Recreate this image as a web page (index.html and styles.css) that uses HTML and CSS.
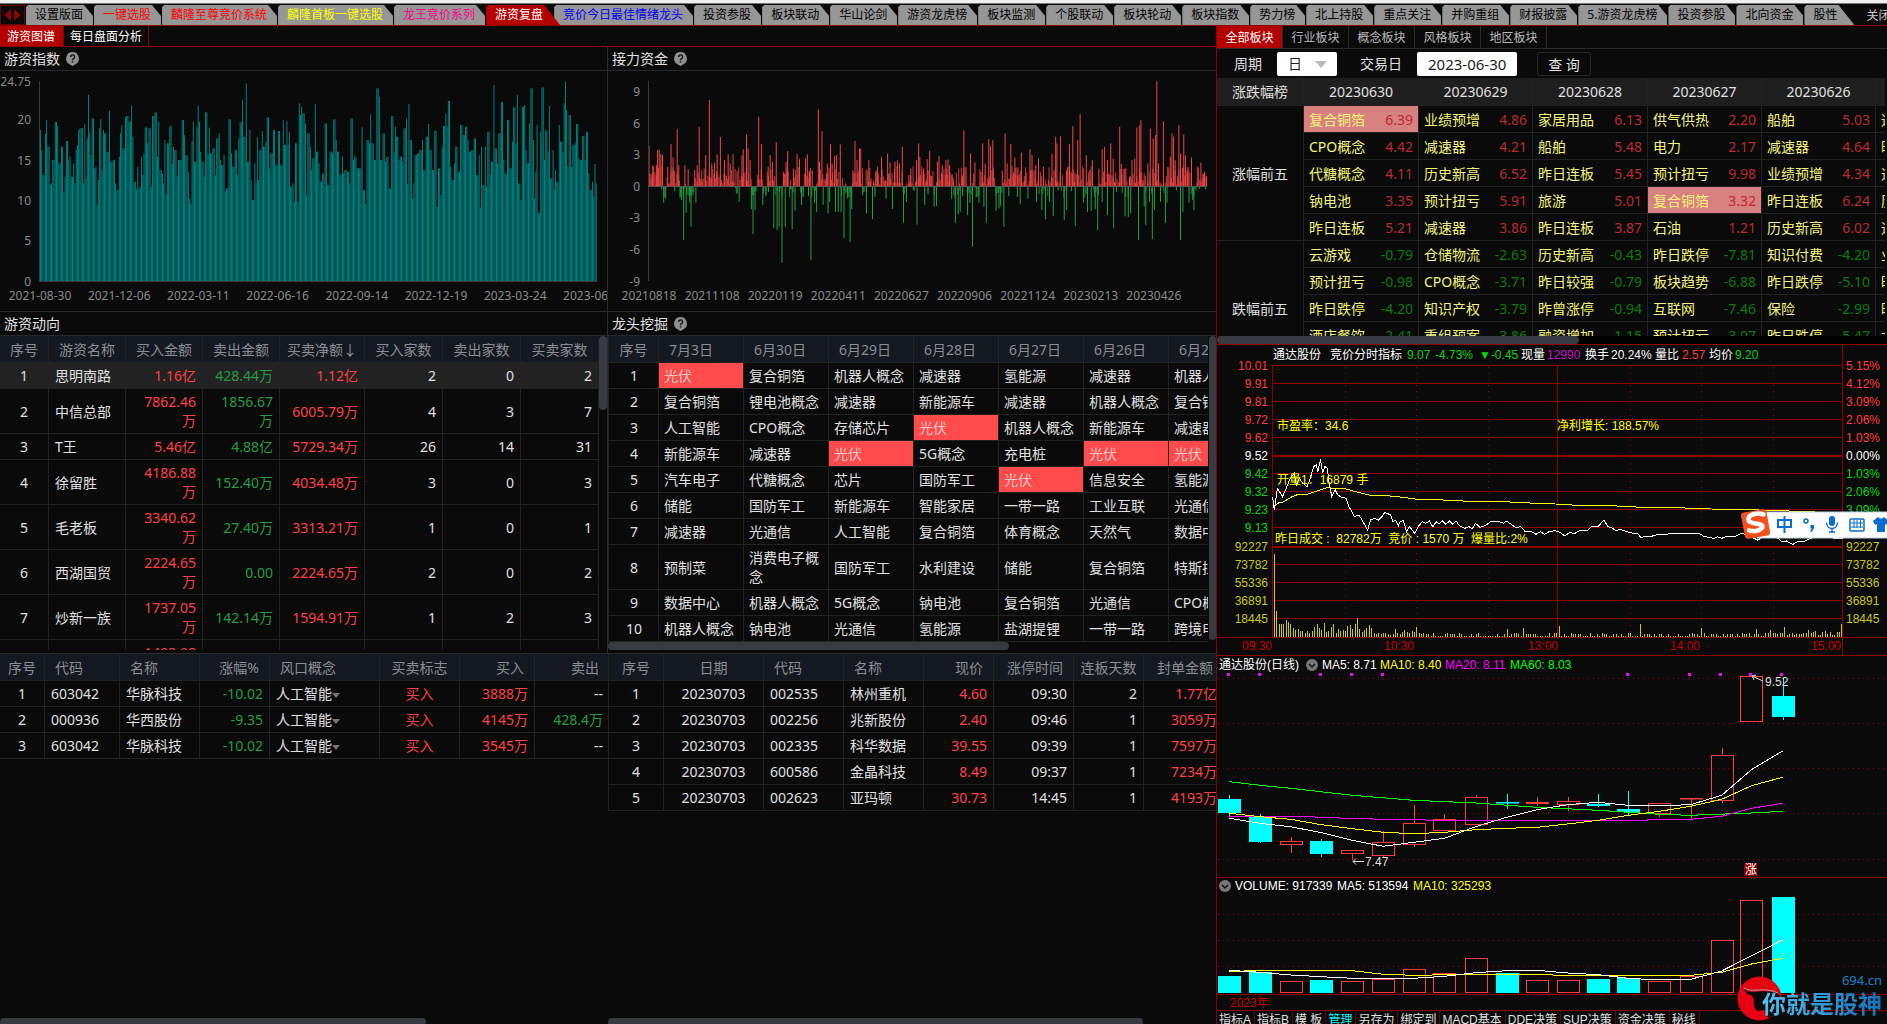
FILE: index.html
```html
<!DOCTYPE html>
<html lang="zh-CN">
<head>
    <meta charset="UTF-8">
    <meta name="viewport" content="width=device-width, initial-scale=1.0">
    <title>游资复盘</title>
    <link rel="stylesheet" href="styles.css">
</head>
<body>

<div class="window-strip"></div>

<!-- Page tabs -->
<nav class="page-tabs">
    <span class="tab-arrows">
        <button class="arrow arrow-left" aria-label="向左"></button>
        <button class="arrow arrow-right" aria-label="向右"></button>
    </span>
    <button class="page-tab">设置版面</button>
    <button class="page-tab tab-red">一键选股</button>
    <button class="page-tab tab-red">麟隆至尊竞价系统</button>
    <button class="page-tab tab-yellow">麟隆首板一键选股</button>
    <button class="page-tab tab-pink">龙王竞价系列</button>
    <button class="page-tab active">游资复盘</button>
    <button class="page-tab tab-blue">竞价今日最佳情绪龙头</button>
    <button class="page-tab">投资参股</button>
    <button class="page-tab">板块联动</button>
    <button class="page-tab">华山论剑</button>
    <button class="page-tab">游资龙虎榜</button>
    <button class="page-tab">板块监测</button>
    <button class="page-tab">个股联动</button>
    <button class="page-tab">板块轮动</button>
    <button class="page-tab">板块指数</button>
    <button class="page-tab">势力榜</button>
    <button class="page-tab">北上持股</button>
    <button class="page-tab">重点关注</button>
    <button class="page-tab">并购重组</button>
    <button class="page-tab">财报披露</button>
    <button class="page-tab">5.游资龙虎榜</button>
    <button class="page-tab">投资参股</button>
    <button class="page-tab">北向资金</button>
    <button class="page-tab tab-end">股性</button>
    <button class="tab-close">关闭</button>
</nav>

<main class="workspace">

    <!-- Left side: charts and tables -->
    <section class="review">
        <nav class="sub-tabs">
            <button class="sub-tab active">游资图谱</button>
            <button class="sub-tab">每日盘面分析</button>
        </nav>

        <div class="review-grid">
            <div class="panel">
                <h2 class="panel-title">游资指数
                    <svg class="help" viewBox="0 0 13 14"><path d="M6.5 0a6.5 6.5 0 0 1 2.6 12.4L6.5 14l-2.6-1.6A6.5 6.5 0 0 1 6.5 0z" fill="#8f8f8f"/><path d="M4.6 5a2 2 0 1 1 2.9 1.7c-.8.4-1 .7-1 1.5M6.5 9.300v1.200" fill="none" stroke="#111" stroke-width="1.400"/></svg>
                </h2>
                <svg class="chart" id="indexChart" viewBox="0 0 607 240"></svg>
            </div>
            <div class="panel">
                <h2 class="panel-title">接力资金
                    <svg class="help" viewBox="0 0 13 14"><path d="M6.5 0a6.5 6.5 0 0 1 2.6 12.4L6.5 14l-2.6-1.6A6.5 6.5 0 0 1 6.5 0z" fill="#8f8f8f"/><path d="M4.6 5a2 2 0 1 1 2.9 1.7c-.8.4-1 .7-1 1.5M6.5 9.300v1.200" fill="none" stroke="#111" stroke-width="1.400"/></svg>
                </h2>
                <svg class="chart" id="relayChart" viewBox="0 0 608 240"></svg>
            </div>

            <div class="panel">
                <h2 class="panel-title">游资动向</h2>
                <div class="table-pane">
                    <table class="grid-table moves">
                        <colgroup><col class="w49"><col class="w77"><col class="w77"><col class="w77"><col class="w85"><col class="w78"><col class="w78"><col class="w78"></colgroup>
                        <thead>
                            <tr><th>序号</th><th>游资名称</th><th>买入金额</th><th>卖出金额</th><th>买卖净额↓</th><th>买入家数</th><th>卖出家数</th><th>买卖家数</th></tr>
                        </thead>
                        <tbody>
                            <tr class="selected"><td class="mid">1</td><td>思明南路</td><td class="num up">1.16亿</td><td class="num down">428.44万</td><td class="num up">1.12亿</td><td class="num">2</td><td class="num">0</td><td class="num">2</td></tr>
                            <tr><td class="mid">2</td><td>中信总部</td><td class="num up">7862.46万</td><td class="num down">1856.67万</td><td class="num up">6005.79万</td><td class="num">4</td><td class="num">3</td><td class="num">7</td></tr>
                            <tr><td class="mid">3</td><td>T王</td><td class="num up">5.46亿</td><td class="num down">4.88亿</td><td class="num up">5729.34万</td><td class="num">26</td><td class="num">14</td><td class="num">31</td></tr>
                            <tr><td class="mid">4</td><td>徐留胜</td><td class="num up">4186.88万</td><td class="num down">152.40万</td><td class="num up">4034.48万</td><td class="num">3</td><td class="num">0</td><td class="num">3</td></tr>
                            <tr><td class="mid">5</td><td>毛老板</td><td class="num up">3340.62万</td><td class="num down">27.40万</td><td class="num up">3313.21万</td><td class="num">1</td><td class="num">0</td><td class="num">1</td></tr>
                            <tr><td class="mid">6</td><td>西湖国贸</td><td class="num up">2224.65万</td><td class="num down">0.00</td><td class="num up">2224.65万</td><td class="num">2</td><td class="num">0</td><td class="num">2</td></tr>
                            <tr><td class="mid">7</td><td>炒新一族</td><td class="num up">1737.05万</td><td class="num down">142.14万</td><td class="num up">1594.91万</td><td class="num">1</td><td class="num">2</td><td class="num">3</td></tr>
                            <tr><td></td><td></td><td class="num up">1493.98万</td><td></td><td></td><td></td><td></td><td></td></tr>
                        </tbody>
                    </table>
                </div>
                <span class="thumb thumb-moves"></span>
            </div>

            <div class="panel">
                <h2 class="panel-title">龙头挖掘
                    <svg class="help" viewBox="0 0 13 14"><path d="M6.5 0a6.5 6.5 0 0 1 2.6 12.4L6.5 14l-2.6-1.6A6.5 6.5 0 0 1 6.5 0z" fill="#8f8f8f"/><path d="M4.6 5a2 2 0 1 1 2.9 1.7c-.8.4-1 .7-1 1.5M6.5 9.300v1.200" fill="none" stroke="#111" stroke-width="1.400"/></svg>
                </h2>
                <div class="table-pane pane-leaders">
                    <table class="grid-table leaders">
                        <colgroup><col class="w51"><col class="w85"><col class="w85"><col class="w85"><col class="w85"><col class="w85"><col class="w85"><col class="w85"></colgroup>
                        <thead>
                            <tr><th>序号</th><th>7月3日</th><th>6月30日</th><th>6月29日</th><th>6月28日</th><th>6月27日</th><th>6月26日</th><th>6月21日</th></tr>
                        </thead>
                        <tbody>
                            <tr><td class="mid">1</td><td class="hot">光伏</td><td>复合铜箔</td><td>机器人概念</td><td>减速器</td><td>氢能源</td><td>减速器</td><td>机器人概念</td></tr>
                            <tr><td class="mid">2</td><td>复合铜箔</td><td>锂电池概念</td><td>减速器</td><td>新能源车</td><td>减速器</td><td>机器人概念</td><td>复合铜箔</td></tr>
                            <tr><td class="mid">3</td><td>人工智能</td><td>CPO概念</td><td>存储芯片</td><td class="hot">光伏</td><td>机器人概念</td><td>新能源车</td><td>减速器</td></tr>
                            <tr><td class="mid">4</td><td>新能源车</td><td>减速器</td><td class="hot">光伏</td><td>5G概念</td><td>充电桩</td><td class="hot">光伏</td><td class="hot">光伏</td></tr>
                            <tr><td class="mid">5</td><td>汽车电子</td><td>代糖概念</td><td>芯片</td><td>国防军工</td><td class="hot">光伏</td><td>信息安全</td><td>氢能源</td></tr>
                            <tr><td class="mid">6</td><td>储能</td><td>国防军工</td><td>新能源车</td><td>智能家居</td><td>一带一路</td><td>工业互联</td><td>光通信</td></tr>
                            <tr><td class="mid">7</td><td>减速器</td><td>光通信</td><td>人工智能</td><td>复合铜箔</td><td>体育概念</td><td>天然气</td><td>数据中心</td></tr>
                            <tr><td class="mid">8</td><td>预制菜</td><td>消费电子概念</td><td>国防军工</td><td>水利建设</td><td>储能</td><td>复合铜箔</td><td>特斯拉</td></tr>
                            <tr><td class="mid">9</td><td>数据中心</td><td>机器人概念</td><td>5G概念</td><td>钠电池</td><td>复合铜箔</td><td>光通信</td><td>CPO概念</td></tr>
                            <tr><td class="mid">10</td><td>机器人概念</td><td>钠电池</td><td>光通信</td><td>氢能源</td><td>盐湖提锂</td><td>一带一路</td><td>跨境电商</td></tr>
                        </tbody>
                    </table>
                </div>
                <span class="thumb thumb-leaders-v"></span>
                <span class="thumb thumb-leaders-h"></span>
            </div>

            <div class="panel panel-last">
                <div class="table-pane pane-last">
                    <table class="grid-table trades">
                        <colgroup><col class="w45"><col class="w75"><col class="w80"><col class="w70"><col class="w110"><col class="w80"><col class="w75"><col class="w75"></colgroup>
                        <thead>
                            <tr><th>序号</th><th class="start">代码</th><th class="start">名称</th><th class="end">涨幅%</th><th class="start">风口概念</th><th>买卖标志</th><th class="end">买入</th><th class="end">卖出</th></tr>
                        </thead>
                        <tbody>
                            <tr><td class="mid">1</td><td>603042</td><td>华脉科技</td><td class="num down">-10.02</td><td>人工智能<i class="caret"></i></td><td class="mid up">买入</td><td class="num up">3888万</td><td class="num">--</td></tr>
                            <tr><td class="mid">2</td><td>000936</td><td>华西股份</td><td class="num down">-9.35</td><td>人工智能<i class="caret"></i></td><td class="mid up">买入</td><td class="num up">4145万</td><td class="num down">428.4万</td></tr>
                            <tr><td class="mid">3</td><td>603042</td><td>华脉科技</td><td class="num down">-10.02</td><td>人工智能<i class="caret"></i></td><td class="mid up">买入</td><td class="num up">3545万</td><td class="num">--</td></tr>
                        </tbody>
                    </table>
                </div>
                <span class="thumb thumb-trades"></span>
            </div>

            <div class="panel panel-last">
                <div class="table-pane pane-last">
                    <table class="grid-table limits">
                        <colgroup><col class="w56"><col class="w100"><col class="w80"><col class="w80"><col class="w70"><col class="w80"><col class="w70"><col class="w80"></colgroup>
                        <thead>
                            <tr><th>序号</th><th>日期</th><th class="start">代码</th><th class="start">名称</th><th class="end">现价</th><th class="end">涨停时间</th><th>连板天数</th><th class="end">封单金额</th></tr>
                        </thead>
                        <tbody>
                            <tr><td class="mid">1</td><td class="mid">20230703</td><td>002535</td><td>林州重机</td><td class="num up">4.60</td><td class="num">09:30</td><td class="num">2</td><td class="num up">1.77亿</td></tr>
                            <tr><td class="mid">2</td><td class="mid">20230703</td><td>002256</td><td>兆新股份</td><td class="num up">2.40</td><td class="num">09:46</td><td class="num">1</td><td class="num up">3059万</td></tr>
                            <tr><td class="mid">3</td><td class="mid">20230703</td><td>002335</td><td>科华数据</td><td class="num up">39.55</td><td class="num">09:39</td><td class="num">1</td><td class="num up">7597万</td></tr>
                            <tr><td class="mid">4</td><td class="mid">20230703</td><td>600586</td><td>金晶科技</td><td class="num up">8.49</td><td class="num">09:37</td><td class="num">1</td><td class="num up">7234万</td></tr>
                            <tr><td class="mid">5</td><td class="mid">20230703</td><td>002623</td><td>亚玛顿</td><td class="num up">30.73</td><td class="num">14:45</td><td class="num">1</td><td class="num up">4193万</td></tr>
                        </tbody>
                    </table>
                </div>
                <span class="thumb thumb-limits"></span>
            </div>
        </div>
    </section>

    <!-- Right side: sector ranking and stock charts -->
    <aside class="market">
        <nav class="sector-tabs">
            <button class="sector-tab active">全部板块</button>
            <button class="sector-tab">行业板块</button>
            <button class="sector-tab">概念板块</button>
            <button class="sector-tab">风格板块</button>
            <button class="sector-tab">地区板块</button>
        </nav>
        <form class="filters">
            <label for="period">周期</label>
            <span class="select-box"><select id="period"><option>日</option></select></span>
            <label for="tradeDate">交易日</label>
            <input id="tradeDate" type="text" value="2023-06-30">
            <button type="button" class="query">查 询</button>
        </form>
        <div class="rank-pane">
            <table class="rank">
                <colgroup><col class="w87"><col class="w115"><col class="w114"><col class="w115"><col class="w114"><col class="w114"><col class="w114"></colgroup>
                <thead>
                    <tr><th>涨跌幅榜</th><th>20230630</th><th>20230629</th><th>20230628</th><th>20230627</th><th>20230626</th><th></th></tr>
                </thead>
                <tbody class="rise">
                    <tr><th rowspan="5">涨幅前五</th><td class="hit">复合铜箔<b>6.39</b></td><td>业绩预增<b>4.86</b></td><td>家居用品<b>6.13</b></td><td>供气供热<b>2.20</b></td><td>船舶<b>5.03</b></td><td>通信设备</td></tr>
                    <tr><td>CPO概念<b>4.42</b></td><td>减速器<b>4.21</b></td><td>船舶<b>5.48</b></td><td>电力<b>2.17</b></td><td>减速器<b>4.64</b></td><td>昨日连板</td></tr>
                    <tr><td>代糖概念<b>4.11</b></td><td>历史新高<b>6.52</b></td><td>昨日连板<b>5.45</b></td><td>预计扭亏<b>9.98</b></td><td>业绩预增<b>4.34</b></td><td>通信设备</td></tr>
                    <tr><td>钠电池<b>3.35</b></td><td>预计扭亏<b>5.91</b></td><td>旅游<b>5.01</b></td><td class="hit">复合铜箔<b>3.32</b></td><td>昨日连板<b>6.24</b></td><td>历史新高</td></tr>
                    <tr><td>昨日连板<b>5.21</b></td><td>减速器<b>3.86</b></td><td>昨日连板<b>3.87</b></td><td>石油<b>1.21</b></td><td>历史新高<b>6.02</b></td><td>通信设备</td></tr>
                </tbody>
                <tbody class="fall">
                    <tr><th rowspan="5">跌幅前五</th><td>云游戏<b>-0.79</b></td><td>仓储物流<b>-2.63</b></td><td>历史新高<b>-0.43</b></td><td>昨日跌停<b>-7.81</b></td><td>知识付费<b>-4.20</b></td><td>业绩预降</td></tr>
                    <tr><td>预计扭亏<b>-0.98</b></td><td>CPO概念<b>-3.71</b></td><td>昨日较强<b>-0.79</b></td><td>板块趋势<b>-6.88</b></td><td>昨日跌停<b>-5.10</b></td><td>昨日跌停</td></tr>
                    <tr><td>昨日跌停<b>-4.20</b></td><td>知识产权<b>-3.79</b></td><td>昨曾涨停<b>-0.94</b></td><td>互联网<b>-7.46</b></td><td>保险<b>-2.99</b></td><td>昨日较强</td></tr>
                    <tr><td>酒店餐饮<b>-2.41</b></td><td>重组预案<b>-3.86</b></td><td>融资增加<b>-1.15</b></td><td>预计扭亏<b>-3.07</b></td><td>昨日跌停<b>-5.47</b></td><td>大盘</td></tr>
                    <tr><td></td><td></td><td></td><td></td><td></td><td></td></tr>
                </tbody>
            </table>
        </div>
        <div class="rank-scroll"><span></span></div>

        <svg class="chart" id="minuteChart" viewBox="0 0 670 311"></svg>
        <svg class="chart" id="dailyChart" viewBox="0 0 670 354"></svg>

        <nav class="indicator-tabs">
            <button>指标A</button><button>指标B</button><button>模 板</button><button class="active">管理</button><button>另存为</button><button>绑定到</button><button>MACD基本</button><button>DDE决策</button><button>SUP决策</button><button>资金决策</button><button>秘线</button>
        </nav>

        <!-- Input method toolbar floating over the chart -->
        <div class="ime">
            <svg viewBox="0 0 148 32">
                <rect x="18" y="4" width="131" height="26" fill="#fff" stroke="#b9d3ec"/>
                <path d="M4.500 4.500 24 1.200q3-.4 3.500 2.500l3.500 20q.4 3-2.500 3.800L9.500 30.800q-3 .4-3.500-2.500L2 8q-.2-3 2.500-3.500z" fill="#f4511e"/>
                <path d="M24.500 6.500c-6-2-14-.5-15 3.700-1 4.300 4.500 5 8.500 5.600 4.500.6 7 1.600 4.500 4.600-2.300 2.700-8.500 3.300-12.500 2" fill="none" stroke="#fff" stroke-width="4.500" stroke-linecap="round"/>
                <path d="M39 12h13v7H39zM45.500 8v17" fill="none" stroke="#0a6ccf" stroke-width="2"/>
                <circle cx="67" cy="13" r="2" fill="none" stroke="#0a6ccf" stroke-width="1.500"/>
                <path d="M71.500 17h3.500v3q-.5 3-3.500 4l-.5-1q1.500-1 1.500-2.500h-1z" fill="#0a6ccf"/>
                <rect x="90" y="8" width="6" height="10" rx="3" fill="#0a6ccf"/>
                <path d="M87.500 14.500c0 8 11 8 11 0M93 21v3M90 24h6" fill="none" stroke="#0a6ccf" stroke-width="1.500"/>
                <rect x="111" y="11" width="14" height="12" rx="1" fill="none" stroke="#0a6ccf" stroke-width="1.500"/>
                <path d="M112 15h12M112 19h12M115 12v8M118 12v8M121.500 12v8" stroke="#0a6ccf"/>
                <path d="M134 13l5-4q3 3 6 0l5 4-2 4-2-1v8h-8v-8l-2 1z" fill="#0a6ccf"/>
            </svg>
        </div>

        <!-- Site mark -->
        <div class="site-mark">
            <svg class="mark-bull" viewBox="0 0 46 46">
                <circle cx="22.500" cy="22.500" r="22" fill="#e60012"/>
                <path d="M7 12q2 4 10 4 14-2 24 1l4 8v9L32 42q-3-2-2-5l-3-3-7 1q-4-4-3-12l-3-4q-6-1-7-7z" fill="#0a0a0a"/>
                <path d="M7 12q4 3 14 2 12-1 20 3" fill="none" stroke="#aaa"/>
            </svg>
            <span class="mark-site">694.cn</span>
            <span class="mark-name">你就是股神</span>
        </div>
    </aside>
</main>

<script src="charts.js"></script>
</body>
</html>
```
FILE: styles.css
```css
* {
    box-sizing: border-box;
}

body {
    margin: 0;
    height: 100vh;
    display: flex;
    flex-direction: column;
    overflow: hidden;
    background-color: #0a0a0a;
    color: #e0e0e0;
    font-family: "Noto Sans", "Noto Sans CJK SC", sans-serif;
    font-size: 14px;
    line-height: 19px;
}

button {
    font-family: inherit;
    font-size: 12px;
    border: 0;
    padding: 0;
    margin: 0;
    background: none;
    color: inherit;
    white-space: nowrap;
    cursor: pointer;
}

.window-strip {
    flex: none;
    height: 4px;
    background-color: #f0f0f0;
    border-bottom: 1px solid #777;
}

/* Page tabs */
.page-tabs {
    flex: none;
    display: flex;
    height: 22px;
    padding-top: 1px;
    border-bottom: 1px solid #8b0000;
    overflow: hidden;
}

.tab-arrows {
    flex: none;
    display: flex;
    align-items: center;
    justify-content: space-between;
    width: 25px;
    padding: 0 3px;
    margin-right: 1px;
    border: 1px solid #6b0000;
}

.arrow {
    border: 6px solid transparent;
}

.arrow-left {
    border-left: 0;
    border-right: 7px solid #8b0000;
}

.arrow-right {
    border-right: 0;
    border-left: 7px solid #8b0000;
}

.page-tab {
    flex: none;
    height: 20px;
    padding: 0 10px 0 9px;
    margin-right: 1px;
    line-height: 20px;
    background-color: #969696;
    color: #000;
    clip-path: polygon(0 2px, 2px 0, calc(100% - 9px) 0, 100% 11px, 100% 100%, 0 100%);
}

/* The selected and the last tab slope all the way down */
.page-tab.active,
.page-tab.tab-end {
    padding-right: 17px;
    clip-path: polygon(0 2px, 2px 0, calc(100% - 16px) 0, 100% 100%, 0 100%);
}

.page-tab.active {
    position: relative;
    z-index: 1;
    margin-right: -6px;
    background-color: #b40000;
    color: #fff;
}

.tab-red { color: #f00; }
.tab-yellow { color: #ff0; }
.tab-pink { color: #f08; }
.tab-blue { color: #00f; }

.tab-close {
    flex: none;
    margin-left: 11px;
    color: #ccc;
}

/* Main areas */
.workspace {
    flex: 1;
    min-height: 0;
    display: grid;
    grid-template-columns: minmax(0, 1216fr) minmax(0, 671fr);
}

.review {
    display: flex;
    flex-direction: column;
    min-height: 0;
}

.sub-tabs {
    display: flex;
    height: 21px;
    border-bottom: 1px solid #8b0000;
}

.sub-tab {
    padding: 0 6px;
    border-right: 1px solid #8b0000;
    color: #fff;
}

.sub-tab.active {
    padding: 0 8px 0 7px;
    background-color: #b40000;
}

.review-grid {
    flex: 1;
    min-height: 0;
    display: grid;
    grid-template-columns: minmax(0, 608fr) minmax(0, 608fr);
    grid-template-rows: auto auto 1fr;
}

.panel {
    position: relative;
    min-height: 0;
    border-right: 1px solid #2b2b30;
    border-bottom: 1px solid #2b2b30;
    overflow: hidden;
}

.panel:nth-child(even) {
    border-right: 0;
}

.panel-last {
    border: 0;
}

.panel-title {
    display: flex;
    align-items: center;
    gap: 6px;
    height: 24px;
    margin: 0;
    padding-left: 4px;
    border-bottom: 1px solid #25282c;
    font-size: 14px;
    font-weight: normal;
}

.help {
    width: 13px;
    height: 14px;
}

.chart {
    display: block;
    width: 100%;
    height: auto;
}

/* Tables */
.table-pane {
    height: 314px;
    margin-bottom: 3px;
    overflow: hidden;
}

.pane-leaders {
    height: 306px;
    margin: 0 8px 11px 0;
}

.pane-last {
    height: 100%;
    margin: 0;
}

.grid-table {
    table-layout: fixed;
    border-collapse: separate;
    border-spacing: 0;
    width: 0;
}

.grid-table th,
.grid-table td {
    border-right: 1px solid #222;
    border-bottom: 1px solid #222;
    padding: 3px 6px;
    text-align: left;
    word-break: break-all;
}

.grid-table th {
    height: 27px;
    padding: 3px 0;
    background-color: #141820;
    color: #8a8f96;
    font-weight: normal;
    text-align: center;
    white-space: nowrap;
}

.grid-table th.start,
.leaders th + th {
    padding-left: 10px;
    text-align: left;
}

.grid-table th.end {
    padding-right: 10px;
    text-align: right;
}

.grid-table td.mid {
    text-align: center;
}

.grid-table td.num {
    text-align: right;
}

.leaders td {
    padding: 3px 4px 3px 5px;
}

.leaders td:first-child,
.leaders th:first-child,
.limits td:first-child,
.limits th:first-child {
    border-left: 1px solid #222;
}

.up { color: #ff4141; }
.down { color: #259b46; }

.selected td {
    background-color: #222;
}

.hot {
    background-color: #ff4b4b;
    color: #e6c8c8;
}

.caret {
    display: inline-block;
    vertical-align: middle;
    border: 4px solid transparent;
    border-top: 5px solid #777;
    border-bottom: 0;
}

.w45 { width: 45px; }
.w49 { width: 49px; }
.w51 { width: 51px; }
.w56 { width: 56px; }
.w70 { width: 70px; }
.w75 { width: 75px; }
.w77 { width: 77px; }
.w78 { width: 78px; }
.w80 { width: 80px; }
.w85 { width: 85px; }
.w87 { width: 87px; }
.w100 { width: 100px; }
.w110 { width: 110px; }
.w114 { width: 114px; }
.w115 { width: 115px; }

/* Scrollbar thumbs */
.thumb {
    position: absolute;
    border-radius: 4px;
    background-color: #383a42;
}

.thumb-moves {
    top: 24px;
    right: 0;
    width: 8px;
    height: 74px;
}

.thumb-leaders-v {
    top: 24px;
    right: 0;
    width: 7px;
    height: 304px;
}

.thumb-leaders-h {
    bottom: 3px;
    left: 0;
    width: 66%;
    height: 8px;
}

.thumb-trades {
    bottom: -2px;
    left: 0;
    width: 70%;
    height: 8px;
}

.thumb-limits {
    bottom: -2px;
    left: 0;
    width: 88%;
    height: 8px;
}

/* Sector ranking */
.market {
    position: relative;
    min-height: 0;
    overflow: hidden;
    border-left: 1px solid #8b0000;
}

.sector-tabs {
    display: flex;
    height: 23px;
    border-bottom: 1px solid #2a2a2a;
}

.sector-tab {
    width: 66px;
    border-right: 1px solid #2a2a2a;
    color: #bbb;
}

.sector-tab.active {
    background-color: #b40000;
    color: #fff;
}

.filters {
    display: flex;
    align-items: center;
    height: 29px;
    padding-left: 17px;
}

.filters label {
    margin-right: 15px;
}

.select-box {
    position: relative;
    margin-right: 23px;
}

.select-box::after {
    content: "";
    position: absolute;
    right: 10px;
    top: 9px;
    border: 6px solid transparent;
    border-top: 7px solid #bbb;
    border-bottom: 0;
}

.filters select,
.filters input {
    display: block;
    height: 24px;
    padding: 0 11px;
    border: 0;
    border-radius: 2px;
    background-color: #fff;
    color: #222;
    font: inherit;
    appearance: none;
}

.filters select {
    width: 60px;
}

.filters input {
    width: 100px;
    margin-right: 20px;
    font-size: 15px;
}

.query {
    width: 54px;
    height: 24px;
    border: 1px solid #262626;
    border-radius: 2px;
    font-size: 14px;
}

.rank-pane {
    height: 258px;
    margin-right: 2px;
    overflow: hidden;
}

.rank {
    table-layout: fixed;
    border-collapse: separate;
    border-spacing: 0;
    width: 0;
}

.rank th,
.rank td {
    height: 27px;
    padding: 0 5px;
    border-right: 1px solid #222;
    border-bottom: 1px solid #222;
    white-space: nowrap;
    overflow: hidden;
}

.rank th {
    font-weight: normal;
    text-align: center;
}

.rank thead th {
    height: 28px;
    background-color: #1e1e1e;
}

.rank td {
    color: #f5f57a;
}

.rank b {
    float: right;
    font-weight: normal;
}

.rise b { color: #b92b2e; }
.fall b { color: #0a7a0a; }

.rank .hit {
    background-color: #d98080;
}

.rank-scroll {
    height: 9px;
    background-color: #000;
    border-bottom: 1px solid #8b0000;
}

.rank-scroll span {
    display: block;
    width: 54%;
    height: 8px;
    border-radius: 4px;
    background-color: #383a42;
}

/* Stock charts */
.chart text {
    font-family: "Liberation Sans", "Noto Sans CJK SC", sans-serif;
    font-size: 12px;
    white-space: pre;
}

#indexChart text,
#relayChart text {
    font-family: "Noto Sans", sans-serif;
    fill: #8a8a8a;
}

.indicator-tabs {
    display: flex;
    border-top: 1px solid #8b0000;
}

.indicator-tabs button {
    height: 19px;
    padding: 0 3px 0 2px;
    border-right: 1px solid #6b0000;
    font-family: "Liberation Sans", "Noto Sans CJK SC", sans-serif;
    line-height: 19px;
}

.indicator-tabs .active {
    color: #0ff;
}

/* Overlays */
.ime {
    position: absolute;
    top: 482px;
    right: 0;
    width: 148px;
    height: 32px;
}

.site-mark {
    position: absolute;
    right: 5px;
    bottom: 4px;
    width: 145px;
    height: 50px;
    display: flex;
    flex-direction: column;
    align-items: flex-end;
    color: #1a7fc4;
}

.mark-bull {
    position: absolute;
    left: 0;
    bottom: -2px;
    width: 46px;
    height: 46px;
}

.mark-site {
    position: relative;
    font-size: 13px;
    line-height: 20px;
}

.mark-name {
    position: relative;
    font-size: 24px;
    font-weight: bold;
    line-height: 28px;
    background: linear-gradient(90deg, #4fc3f0, #1470b8);
    background-clip: text;
    color: transparent;
}
```
FILE: charts.js
```javascript
const NS = "http://www.w3.org/2000/svg";

function add(svg, tag, attrs, text) {
    const el = document.createElementNS(NS, tag);
    for (const key in attrs) el.setAttribute(key, attrs[key]);
    if (text !== undefined) el.textContent = text;
    svg.appendChild(el);
    return el;
}

function label(svg, x, y, text, fill, anchor) {
    add(svg, "text", { x, y, fill: fill || "#fff", "text-anchor": anchor || "start" }, text);
}

function seg(svg, x1, y1, x2, y2, stroke, extra) {
    add(svg, "line", Object.assign({ x1, y1, x2, y2, stroke, "shape-rendering": "crispEdges" }, extra));
}

function parse(list) {
    return list.trim().split(/\s+/).map(p => p.split(":").map(Number));
}

// Small repeatable random generator
let seed = 7;
function rand() {
    seed = (seed * 1103515245 + 12345) % 2147483648;
    return seed / 2147483648;
}

// ---- 游资指数 ----
const indexData = parse(`
97:390 100:450 106:525 109:400 112:360 117:440 121:555 124:550 128:480 134:366 140:378 144:490 150:440 153:577 158:530 162:423
166:480 169:470 174:530 178:490 181:550 183:450 187:435 190:390 193:387 199:384 202:550 205:372 208:535 211:415 214:285 217:400
220:465 226:355 229:505 233:500 236:615 240:540 242:385 245:357 248:510 251:390 257:400 261:455 266:332 269:485 276:480 281:550
287:570 291:470 294:400 297:376 300:445 306:352 310:348 316:365 319:316 322:410 325:325 328:545 334:568 337:500 340:562 344:470
347:525 350:460 356:382 360:430 365:385 369:560 374:348 380:337 384:470 387:365 391:510 395:520 399:550 402:420 405:585 411:430
414:380 418:376 421:490 424:440 428:450 432:530 438:480 446:360 449:347 451:405 455:465 458:515 461:595 464:610 468:425 472:365
476:485 480:380 482:318 486:365 490:455 494:485 498:530 503:337 507:460 512:383 515:460 521:445 525:525 531:415 535:400 538:480
543:495 547:465 550:575 556:565 561:358 565:460 570:500 575:450 580:525 584:415 588:367 592:300 596:410 601:250 606:485 611:390
614:540 618:600 621:490 624:550 628:412 632:540 636:450 640:393 645:440 649:425 655:352 659:505 664:460 671:390 676:495 683:393
687:495 691:360 696:435 701:363 705:435 708:395 712:560 716:550 720:605 724:430 727:495 729:605 731:310 735:345 738:320 741:340
746:370 750:585 754:400 758:440 762:510 766:475 771:312 775:455 780:490 785:545 790:520 796:370 801:555 808:455 813:460 818:358
822:420 826:455 832:525 836:470 839:520 845:510 850:515 854:550 860:355 864:480 869:470 876:505 882:505 885:382 889:570 895:612
899:420 905:430 907:343 911:430 918:480 924:265 928:290 932:480 938:400 942:485 949:470 954:565 959:348 963:455 966:380 971:410
975:480 980:470 984:485 989:385 993:355 997:555 1000:312 1004:420 1008:595 1012:550 1016:465 1022:460 1028:450 1034:420 1038:510
1043:410 1048:372 1052:450 1058:510 1064:392 1070:620 1074:505 1079:585 1082:440 1087:378 1092:340 1095:380 1098:303 1103:500
1107:540 1112:490 1117:440 1123:515 1129:375 1135:405 1139:380 1145:420 1150:455 1157:450 1163:415 1168:525 1172:465 1175:623
1178:440 1183:555 1188:440 1191:560 1194:395 1199:525 1205:485 1208:255 1212:445 1218:490 1222:400 1228:306 1232:480 1238:520
1245:360 1249:505 1253:425 1258:322 1262:430 1264:285 1268:550 1276:600 1279:320 1283:315 1287:450 1292:490 1296:370 1300:265
1304:420 1307:595 1311:515 1315:375 1319:638 1323:395 1328:262 1332:480 1337:392 1341:455 1345:318 1349:535 1353:450 1356:568
1360:510 1364:545 1368:375 1373:425 1377:455 1380:310 1384:245 1388:330 1391:500 1394:345 1398:500 1403:435 1407:430 1412:372
1417:475 1422:480 1427:408 1431:480 1436:396 1441:520 1446:570 1449:545 1452:590 1455:492 1459:550 1462:463`);

function drawIndex() {
    const svg = document.getElementById("indexChart");
    const count = 452;
    const step = 557 / count;
    for (let i = 0; i < count; i++) {
        const px = 97 + i * 1365 / count;
        let best = indexData[0];
        for (const p of indexData) if (Math.abs(p[0] - px) < Math.abs(best[0] - px)) best = p;
        const h = (843 - best[1]) / 3;
        add(svg, "rect", { x: 40 + i * step, y: 210 - h, width: step * 0.75, height: h, fill: "#008a88" });
    }
    seg(svg, 39.5, 10, 39.5, 210, "#3a3a3a");
    seg(svg, 39, 210.5, 597, 210.5, "#3a3a3a");
    ["24.75", "20", "15", "10", "5", "0"].forEach((t, i) => label(svg, 31, [15, 53, 94, 134, 174, 215][i], t, null, "end"));
    ["2021-08-30", "2021-12-06", "2022-03-11", "2022-06-16", "2022-09-14", "2022-12-19", "2023-03-24", "2023-06-28"]
        .forEach((t, i) => label(svg, 40 + i * 79.2, 229, t, null, "middle"));
}

// ---- 接力资金 ----
const relayData = parse(`
119:437 124:522 128:495 137:495 140:450 144:448 148:462 152:463 165:500 173:432 178:472 188:387 192:495 207:495 215:507 231:510
237:495 242:380 249:545 258:465 267:300 273:490 280:487 286:463 294:410 304:480 313:462 318:490 325:462 335:512 347:465 350:447
358:403 362:445 367:480 388:350 395:432 411:500 416:465 422:485 431:426 449:515 455:485 459:453 473:505 482:462 488:477 503:475
507:462 512:515 519:510 534:327 537:485 543:393 553:535 556:490 564:432 568:490 574:467 579:465 588:433 601:550 619:510 624:422
629:480 635:445 638:445 658:480 662:545 675:515 679:500 689:470 698:540 704:460 710:487 722:485 728:480 733:490 740:440 756:525
761:505 775:480 780:430 783:470 792:505 801:477 807:452 812:527 826:485 830:467 838:495 847:480 852:478 856:495 865:535 880:550
886:530 891:390 907:460 918:487 933:515 937:430 943:490 952:417 956:438 962:420 985:512 992:400 997:490 1006:432 1012:515
1016:472 1023:525 1032:457 1040:540 1053:447 1058:465 1067:495 1074:475 1086:500 1098:540 1107:460 1116:410 1119:430 1128:408
1143:510 1150:432 1158:378 1162:545 1170:420 1176:342 1191:465 1200:510 1206:480 1222:505 1230:447 1236:440 1243:480 1251:430
1257:475 1262:547 1273:380 1277:492 1288:505 1297:530 1303:480 1310:475 1315:382 1322:375 1325:360 1330:540 1342:490 1348:385
1355:415 1361:405 1364:243 1368:490 1380:363 1391:500 1397:470 1401:400 1405:410 1409:480 1418:375 1422:460 1430:403 1434:465
1440:500 1449:472 1463:545 1472:487 1477:520 1481:515 1486:527
150:567 155:608 160:595 182:573 195:592 199:600 204:720 210:638 219:608 222:680 227:575 234:608 331:563 340:605 370:627 374:702
379:630 398:614 406:583 412:575 425:683 433:690 438:680 445:788 453:680 466:567 470:687 477:632 493:614 497:590 510:587 516:780
525:608 530:635 546:614 558:640 562:605 576:635 583:635 590:635 597:714 606:595 612:726 616:627 643:585 652:640 667:657 673:590
700:596 716:626 743:668 750:605 767:570 776:673 795:614 803:582 818:620 824:617 861:597 870:668 877:642 882:635 888:587 900:645
906:608 912:740 923:590 928:608 940:620 946:668 970:632 977:625 981:617 989:680 1001:587 1022:590 1029:612 1048:595 1069:605
1082:630 1091:657 1101:605 1110:648 1122:570 1137:660 1143:630 1155:572 1164:678 1184:608 1194:635 1203:632 1213:627 1219:690
1230:605 1243:645 1258:683 1265:575 1279:578 1286:648 1294:650 1300:640 1319:720 1333:620 1337:675 1346:605 1353:717 1358:630
1373:605 1385:668 1389:608 1412:570 1422:720 1428:635 1443:608 1452:600 1455:630 1468:567 1483:567`);

function drawRelay() {
    const svg = document.getElementById("relayChart");
    const bar = (px, py, tone) => {
        const x = 40.5 + (px - 119) * 558 / 1368;
        const h = (559 - py) / 3;
        const fill = h > 0 ? "#f04646" : "#22a045";
        add(svg, "rect", { x, y: h > 0 ? 115.5 - h : 115.5, width: 1, height: Math.abs(h), fill, opacity: tone || 1 });
    };
    for (let px = 121; px < 1486; px += 3.03) {
        const near = relayData.filter(p => Math.abs(p[0] - px) < 8);
        const rising = near.filter(p => p[1] < 559).length >= near.length / 2;
        bar(px, rising ? 559 - 6 - rand() * 55 : 559 + 3 + rand() * 30, 0.8);
    }
    relayData.forEach(p => bar(p[0], p[1]));
    seg(svg, 40.5, 10, 40.5, 210, "#3a3a3a");
    seg(svg, 40, 115.5, 599, 115.5, "#555");
    [9, 6, 3, 0, -3, -6, -9].forEach((v, i) => label(svg, 32, 25 + i * 31.6, v, null, "end"));
    ["20210818", "20211108", "20220119", "20220411", "20220627", "20220906", "20221124", "20230213", "20230426"]
        .forEach((t, i) => label(svg, 41 + i * 63.1, 229, t, null, "middle"));
}

// ---- 分时图 ----
const priceData = parse(`
145:470 149:510 156:445 168:470 178:440 184:420 195:400 200:435 207:415 215:430 225:440 232:415 240:380 246:375 250:395 256:358
261:400 266:380 272:385 275:420 282:470 290:450 296:465 305:472 315:475 322:500 335:530 345:525 352:540 365:570 372:540 380:535
390:540 398:530 405:517 418:525 424:545 430:540 436:558 440:545 448:542 455:575 462:560 474:580 482:560 492:545 500:550 508:543
516:560 524:545 530:552 538:543 546:553 555:543 562:552 570:543 578:558 590:565 600:560 607:567 615:550 625:562 632:560 640:555
650:545 665:543 680:550 686:543 700:555 708:563 720:560 730:575 745:575 755:583 765:575 775:583 785:575 800:572 812:578 822:588
832:578 845:580 855:572 875:570 885:558 900:558 912:540 922:560 932:565 940:572 950:568 965:575 980:580 990:580 998:593 1010:588
1025:588 1040:582 1060:582 1080:580 1095:582 1110:580 1135:582 1145:590 1158:592 1168:596 1175:590 1185:595 1200:588 1215:590
1230:580 1245:585 1268:600 1280:592 1300:590 1315:595 1325:605 1335:603 1350:613 1360:605 1375:605 1390:595 1410:590 1430:585
1445:595 1465:595`);
const averageData = parse(`
149:497 160:488 170:486 190:470 205:463 225:463 250:452 270:443 315:447 340:456 370:466 410:467 440:471 480:478 540:480 600:484
680:485 740:489 800:492 850:496 930:497 1000:502 1080:503 1160:507 1240:509 1300:511 1380:515 1400:516 1465:518`);
const openVolumes = [250, 78, 40, 40, 40, 52, 45, 40, 27, 22, 24, 17, 19, 12, 18, 12, 19, 30, 40, 26, 22, 41, 15, 19, 30, 39, 12, 24,
    17, 22, 18, 33, 36, 25, 38, 57, 24, 14, 20, 26, 36, 28, 12, 9, 12, 8, 11, 12, 8, 6, 9, 24, 12, 9, 14, 20, 16, 11, 18, 14];
const volumeSpikes = { 98: 24, 105: 27, 120: 33, 154: 40, 180: 27, 203: 25, 215: 30, 239: 40 };

const SX = 1 / 2.316;
const mapX = x => x * SX - 7;

function polyline(svg, data, dy, color) {
    add(svg, "polyline", {
        points: data.map(p => mapX(p[0]).toFixed(1) + "," + (p[1] / 3 + dy).toFixed(1)).join(" "),
        fill: "none", stroke: color, "shape-rendering": "crispEdges"
    });
}

function drawMinute() {
    const svg = document.getElementById("minuteChart");
    const red = "#8b0000";
    const left = 55.5, right = 625.5;
    for (let i = 0; i < 10; i++) seg(svg, left, 20.5 + i * 18, right, 20.5 + i * 18, red, { "stroke-width": i === 5 ? 2 : 1 });
    seg(svg, left, 202, right, 202, red, { "stroke-width": 2 });
    for (let i = 1; i < 5; i++) seg(svg, left, 201.5 + i * 18, right, 201.5 + i * 18, red);
    seg(svg, 0, 292.5, 670, 292.5, red);
    seg(svg, 0, 310.5, 670, 310.5, red);
    seg(svg, left, 20, left, 292, red);
    seg(svg, right, 0, right, 310, red);
    [128.5, 199.5, 271.5, 413.5, 484.5, 556.5].forEach(x => seg(svg, x, 22, x, 292, red, { "stroke-dasharray": "1 5" }));
    seg(svg, 340.5, 20, 340.5, 292, red);

    // Price scale on both sides
    const prices = ["10.01", "9.91", "9.81", "9.72", "9.62", "9.52", "9.42", "9.32", "9.23", "9.13"];
    const rates = ["5.15%", "4.12%", "3.09%", "2.06%", "1.03%", "0.00%", "1.03%", "2.06%", "3.09%"];
    const tone = i => i < 5 ? "#ff3c3c" : i === 5 ? "#fff" : "#0fd20f";
    prices.forEach((t, i) => label(svg, 51, 25 + i * 18, t, tone(i), "end"));
    rates.forEach((t, i) => label(svg, 629, 25 + i * 18, t, tone(i)));
    ["92227", "73782", "55336", "36891", "18445"].forEach((t, i) => {
        label(svg, 51, 206 + i * 18, t, "#c8c814", "end");
        label(svg, 629, 206 + i * 18, t, "#c8c814");
    });
    ["09:30", "10:30", "13:00", "14:00", "15:00"].forEach((t, i) => label(svg, [55, 197, 341, 483, 624][i], 305, t, "#c80000", "end"));

    // Volume per minute
    for (let i = 0; i < 240; i++) {
        let h = openVolumes[i] || volumeSpikes[i] || 4 + Math.floor(rand() * 2.4) * 4 + (i > 205 ? rand() * 12 : 0);
        if (i === 60) h = 31;
        seg(svg, mapX(149 + i * 5.5), 292 - h / 3, mapX(149 + i * 5.5), 292, "#c8c814");
    }

    const head = [
        [56, "通达股份", "#fff"], [113, "竞价分时指标", "#fff"], [190, "9.07", "#0fd20f"], [218, "-4.73%", "#0fd20f"],
        [262, "▼-0.45", "#0fd20f"], [304, "现量", "#fff"], [330, "12990", "#c814c8"], [368, "换手", "#fff"],
        [394, "20.24%", "#fff"], [438, "量比", "#fff"], [465, "2.57", "#ff3c3c"], [492, "均价", "#fff"], [518, "9.20", "#0fd20f"]
    ];
    head.forEach(h => label(svg, h[0], 14, h[1], h[2]));

    polyline(svg, priceData, -5, "#fff");
    polyline(svg, averageData, -5, "#ff0");
    label(svg, 60, 85, "市盈率：34.6", "#ff0");
    label(svg, 340, 85, "净利增长: 188.57%", "#ff0");
    label(svg, 60, 139, "开量1：16879 手", "#ff0");
    label(svg, 58, 198, "昨日成交 :  82782万  竞价 : 1570 万  爆量比:2%", "#ff0");
}

// ---- 日线 ----
// x, high, top, bottom, low, volume top, direction
const candles = [
    [45, 435, 447, 489, 500, 978, 0], [116, 492, 500, 576, 579, 966, 0], [187, 561, 574, 584, 609, 994, 1],
    [258, 567, 573, 612, 621, 990, 0], [330, 601, 601, 611, 630, 994, 1], [401, 543, 577, 617, 625, 987, 1],
    [472, 465, 520, 584, 590, 958, 1], [543, 492, 508, 542, 542, 970, 1], [615, 435, 442, 524, 524, 925, 1],
    [687, 432, 456, 459, 477, 969, 0], [757, 441, 457, 461, 468, 991, 1], [828, 441, 454, 464, 483, 991, 1],
    [899, 432, 461, 467, 471, 987, 0], [969, 423, 477, 486, 495, 983, 0], [1041, 460, 460, 493, 500, 994, 1],
    [1113, 445, 445, 448, 508, 979, 1], [1185, 294, 316, 452, 459, 871, 1], [1254, 79, 79, 217, 217, 751, 1],
    [1326, 80, 138, 201, 210, 741, 0]
];
const dailyLines = [
    ["45:395 116:406 187:415 330:436 472:451 615:459 757:472 899:481 1041:493 1113:496 1254:489 1326:484", "#0f0"],
    ["45:501 225:500 300:504 401:508 543:511 687:512 828:511 969:511 1113:508 1185:499 1254:475 1326:460", "#f0f"],
    ["45:490 116:500 187:508 258:524 330:536 401:547 472:551 543:547 615:539 687:535 757:532 828:522 899:511 969:496 1041:484 1113:469 1185:448 1254:407 1326:382", "#ff0"],
    ["45:505 116:520 187:530 258:548 330:571 401:589 472:577 543:565 615:530 687:502 757:479 828:464 899:457 969:466 1041:467 1113:464 1185:436 1254:359 1326:303", "#fff"],
    ["45:964 116:962 330:962 401:973 472:976 615:973 757:974 828:976 1113:976 1185:967 1254:942 1326:925", "#ff0"],
    ["45:961 116:967 187:975 258:980 330:985 401:986 472:985 543:979 615:968 687:962 757:961 828:969 899:974 969:985 1041:990 1113:988 1185:963 1254:917 1326:870", "#fff"]
];

function foldIcon(svg, x, y) {
    add(svg, "circle", { cx: x, cy: y, r: 6, fill: "#777" });
    add(svg, "path", { d: `M${x - 3} ${y - 1}l3 3 3-3`, fill: "none", stroke: "#111", "stroke-width": 1.5 });
}

function drawDaily() {
    const svg = document.getElementById("dailyChart");
    const dy = -6;
    const red = "#8b0000";
    [85, 220, 355, 490, 628, 793, 871, 949].forEach(y => {
        seg(svg, 1, Math.round(y / 3 + dy) + 0.5, 670, Math.round(y / 3 + dy) + 0.5, red, { "stroke-dasharray": "1 4" });
    });
    seg(svg, 0, 221.5, 670, 221.5, red);
    seg(svg, 0, 338.5, 670, 338.5, red);

    candles.forEach(c => {
        const x = Math.round(mapX(c[0])) + 0.5;
        const [high, top, bottom, low, vol] = c.slice(1, 6).map(v => Math.round(v / 3 + dy));
        const color = c[6] ? "#ff3c3c" : "#0ff";
        seg(svg, x, high, x, top, color);
        seg(svg, x, bottom, x, low, color);
        const fill = c[6] ? "none" : color;
        add(svg, "rect", { x: x - 11, y: top + 0.5, width: 22, height: Math.max(bottom - top - 1, 0.5), fill, stroke: color });
        add(svg, "rect", { x: x - 11, y: vol + 0.5, width: 22, height: 336 - vol, fill, stroke: color });
    });
    dailyLines.forEach(l => polyline(svg, parse(l[0]), dy, l[1]));
    [42, 114, 255, 327, 399, 966, 1110, 1182, 1251, 1323].forEach(x => {
        add(svg, "rect", { x: Math.round(mapX(x)) - 1, y: 17, width: 3, height: 3, fill: "#f0f" });
    });

    label(svg, 2, 13, "通达股份(日线)");
    foldIcon(svg, 95, 9);
    label(svg, 105, 13, "MA5: 8.71");
    label(svg, 163, 13, "MA10: 8.40", "#ff0");
    label(svg, 228, 13, "MA20: 8.11", "#f0f");
    label(svg, 293, 13, "MA60: 8.03", "#0f0");
    label(svg, 548, 30, "9.52", "#ddd");
    add(svg, "path", { d: "M546 25l-11-5M539 19l-4 1 2 4", fill: "none", stroke: "#ddd" });
    label(svg, 148, 210, "7.47", "#ddd");
    add(svg, "path", { d: "M147 205.500h-11M139 202.500l-3 3 3 3", fill: "none", stroke: "#ddd" });
    add(svg, "rect", { x: 527, y: 207, width: 13, height: 13, fill: "#8b0000" });
    label(svg, 528, 218, "涨");

    foldIcon(svg, 8, 230);
    label(svg, 18, 234, "VOLUME: 917339");
    label(svg, 120, 234, "MA5: 513594");
    label(svg, 196, 234, "MA10: 325293", "#ff0");
    label(svg, 13, 351, "2023年", "#c80000");
}

drawIndex();
drawRelay();
drawMinute();
drawDaily();
```
